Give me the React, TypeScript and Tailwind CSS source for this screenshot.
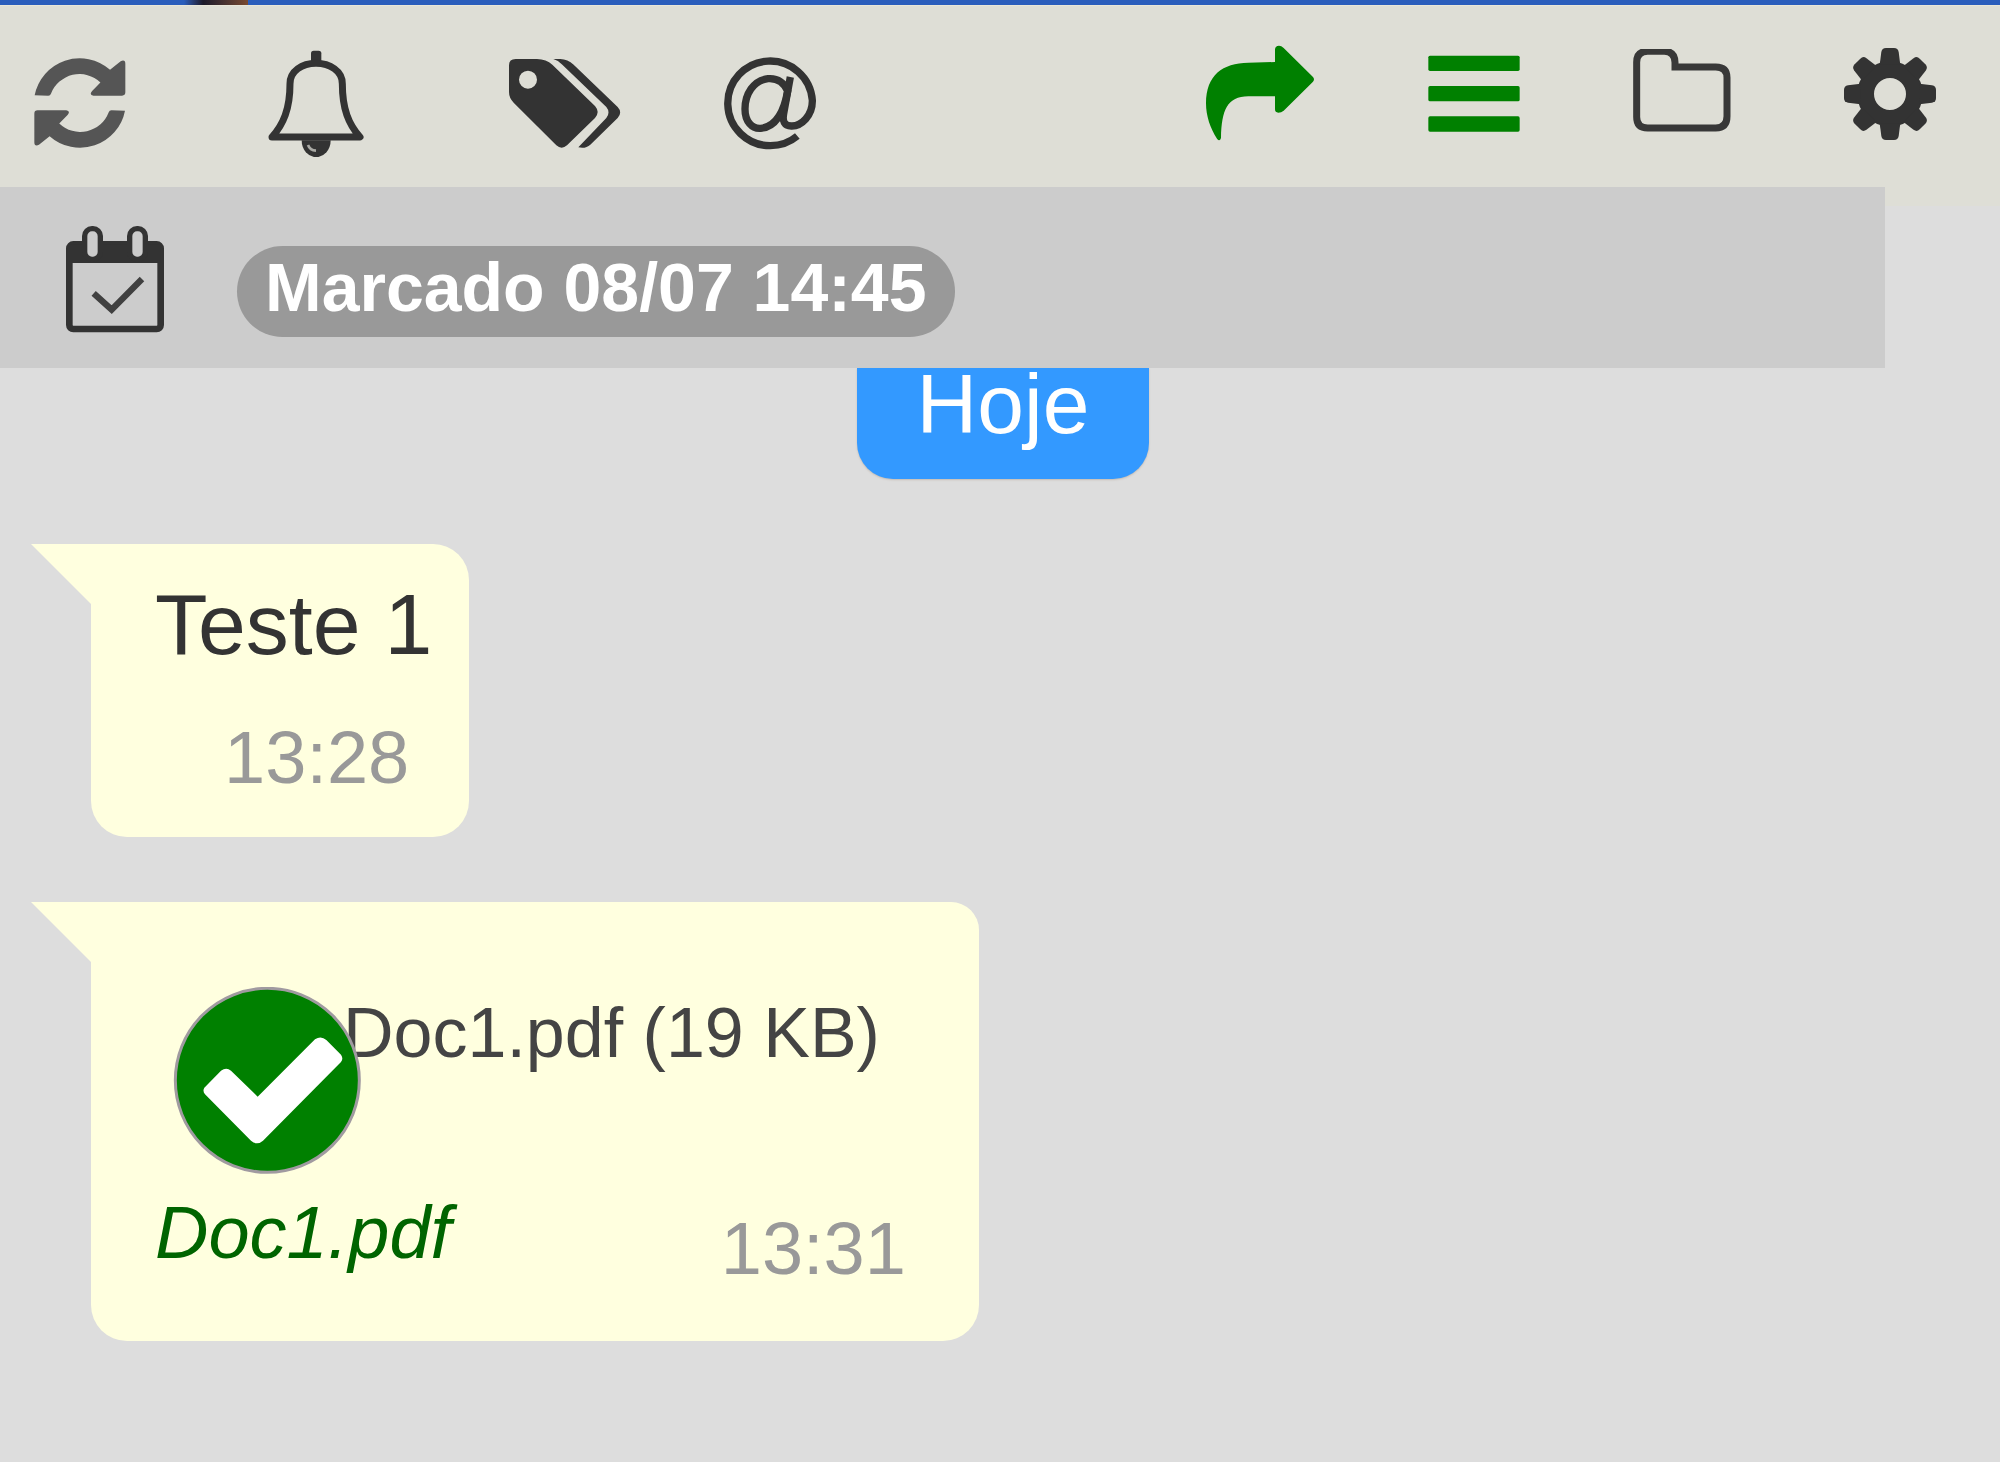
import type { ReactNode } from "react";

const GEAR_ANGLES = [0, 45, 90, 135, 180, 225, 270, 315];

function RefreshIcon() {
  const half =
    "M105 289 A138 138 0 0 1 332 212 L364 186 Q378 180 378 194 V280 Q378 290 368 290 H282 Q268 288 278 276 L303 250 A92 92 0 0 0 154 284 Q152 290 146 290 Z";
  return (
    <svg viewBox="103 168 277 288" className="h-24 w-[92px]" fill="#555555" aria-hidden="true">
      <path d={half} />
      <path d={half} transform="rotate(180 241 312)" />
    </svg>
  );
}

function BellIcon() {
  return (
    <svg viewBox="800 146 300 324" className="h-[108px] w-[100px]" aria-hidden="true">
      <rect x="935" y="151" width="31" height="42" rx="8" fill="#333333" />
      <path
        d="M818 410 C852 372 872 326 872 250 C872 212 908 189 950 189 C992 189 1029 212 1029 250 C1029 326 1048 372 1082 410 Z"
        fill="none"
        stroke="#333333"
        strokeWidth="21"
        strokeLinejoin="round"
      />
      <path d="M907 420 H994 A43 50 0 0 1 907 420 Z" fill="#333333" />
      <path d="M926 434 Q932 450 950 451" fill="none" stroke="#aaaaa5" strokeWidth="8" />
    </svg>
  );
}

function TagsIcon() {
  return (
    <svg viewBox="145 167 342 279" className="h-[93px] w-[114px]" fill="#333333" aria-hidden="true">
      <path
        fillRule="evenodd"
        d="M148 192 Q148 173 168 173 H232 Q260 174 278 190 L406 314 Q422 332 406 350 L322 432 Q306 446 290 432 L162 304 Q148 290 148 272 Z M178 235 A27 27 0 1 0 232 235 A27 27 0 1 0 178 235 Z"
      />
      <path d="M281 173 H302 Q324 174 342 190 L474 317 Q489 333 474 350 L392 430 Q378 443 356 438 L440 350 Q453 333 440 317 L308 190 Q296 177 281 173 Z" />
    </svg>
  );
}

function AtIcon() {
  return (
    <svg
      viewBox="794 170 279 279"
      className="h-[93px] w-[93px]"
      fill="none"
      stroke="#333333"
      strokeWidth="22"
      aria-hidden="true"
    >
      <path d="M1014 407 Q979 436 933 436 A127 127 0 1 1 1059 300 C1060 346 1026 378 996 377 C974 376 969 362 973 340 L993 230" />
      <path d="M985 272 C972 242 952 233 926 235 C882 240 857 282 857 326 C857 364 878 386 904 384 C948 380 973 340 985 272 Z" />
    </svg>
  );
}

function ShareIcon() {
  return (
    <svg viewBox="132 130 330 297" className="h-[99px] w-[110px]" fill="#008000" aria-hidden="true">
      <path d="M342 146 Q343 135 354 135 Q361 135 368 142 L456 229 Q462 236 456 243 L368 330 Q361 336 352 336 Q342 336 342 326 V287 H262 C198 288 182 328 180 412 Q176 424 168 414 C148 384 135 346 135 308 C136 222 184 188 262 186 L342 184 Z" />
    </svg>
  );
}

function BarsIcon() {
  return (
    <svg viewBox="796 165 276 231" className="h-[77px] w-[92px]" fill="#008000" aria-hidden="true">
      <rect x="797" y="167" width="274" height="46" rx="5" />
      <rect x="797" y="258" width="274" height="46" rx="5" />
      <rect x="797" y="349" width="274" height="46" rx="5" />
    </svg>
  );
}

function FolderIcon() {
  return (
    <svg viewBox="156 148 294 267" className="h-[89px] w-[98px]" aria-hidden="true">
      <path
        d="M167 188 Q167 155 200 155 H250 Q281 155 282 188 V202 H404 Q438 202 438 234 V350 Q438 385 404 385 H200 Q167 385 167 352 Z"
        fill="none"
        stroke="#383838"
        strokeWidth="21"
        className="overflow-visible"
      />
    </svg>
  );
}

function GearIcon() {
  return (
    <svg viewBox="-138 -141 276 282" className="h-[94px] w-[92px]" fill="#333333" aria-hidden="true">
      <circle r="73" fill="none" stroke="#333333" strokeWidth="50" />
      {GEAR_ANGLES.map((angle) => (
        <path
          key={angle}
          transform={`rotate(${angle})`}
          d="M-31 -88 L-26 -126 Q-24 -138 -12 -138 H12 Q24 -138 26 -126 L31 -88 Z"
        />
      ))}
    </svg>
  );
}

function CalendarCheckIcon() {
  return (
    <svg viewBox="198 138 294 324" className="h-[108px] w-[98px]" aria-hidden="true">
      <rect x="208" y="196" width="274" height="254" rx="12" fill="none" stroke="#333333" strokeWidth="20" />
      <path d="M208 196 H482 V252 H208 Z" fill="#333333" />
      <rect x="254" y="149" width="47" height="92" rx="22" fill="#cccccc" stroke="#333333" strokeWidth="16" />
      <rect x="389" y="149" width="47" height="92" rx="22" fill="#cccccc" stroke="#333333" strokeWidth="16" />
      <path d="M281 343 L335 392 L426 300" fill="none" stroke="#404040" strokeWidth="19" />
    </svg>
  );
}

function DoneIcon() {
  return (
    <svg viewBox="518 323 564 561" className="relative z-10 h-[187px] w-[188px] shrink-0" role="img" aria-label="Concluído">
      <circle cx="801" cy="603" r="276" fill="#008000" stroke="#a09aa0" strokeWidth="9" />
      <path
        d="M612 625 Q606 635 614 645 L752 784 Q770 800 788 784 L1022 548 Q1030 538 1022 526 L978 482 Q962 468 944 480 L772 652 L692 574 Q678 562 662 574 Z"
        fill="#ffffff"
      />
    </svg>
  );
}

function ToolButton({ label, children }: { label: string; children: ReactNode }) {
  return (
    <button type="button" aria-label={label} className="flex cursor-pointer items-center justify-center">
      {children}
    </button>
  );
}

function Bubble({ className, children }: { className: string; children: ReactNode }) {
  return (
    <article className={`relative w-fit rounded-b-[36px] bg-[#ffffdf] pl-16 ${className}`}>
      <svg viewBox="0 0 60 60" className="absolute top-0 right-full h-[60px] w-[60px]" aria-hidden="true">
        <path d="M0 0 H60 V60 Z" fill="#ffffdf" />
      </svg>
      {children}
    </article>
  );
}

export default function App() {
  return (
    <div className="min-h-screen bg-[#dddddd] font-['Liberation_Sans',Arial,sans-serif] text-[#333333]">
      <div className="h-[5px] bg-[#2a5dbc] pl-[184px]">
        <div className="h-full w-16 bg-linear-to-r from-[#2a5dbc] via-[#1c1a2a] via-30% to-[#7a4a30]" />
      </div>
      <header className="flex h-[182px] items-start justify-between border-t border-[#e8e6d8] bg-[#deded6] pr-16 pl-[34px]">
        <div className="flex items-center pt-[43px]">
          <ToolButton label="Atualizar"><RefreshIcon /></ToolButton>
          <div className="ml-[140px] flex"><ToolButton label="Notificações"><BellIcon /></ToolButton></div>
          <div className="ml-[142px] flex"><ToolButton label="Etiquetas"><TagsIcon /></ToolButton></div>
          <div className="ml-[102px] flex"><ToolButton label="Menções"><AtIcon /></ToolButton></div>
        </div>
        <div className="flex items-center gap-[113px] pt-[38px]">
          <ToolButton label="Encaminhar"><ShareIcon /></ToolButton>
          <ToolButton label="Menu"><BarsIcon /></ToolButton>
          <ToolButton label="Pasta"><FolderIcon /></ToolButton>
          <ToolButton label="Configurações"><GearIcon /></ToolButton>
        </div>
      </header>
      <div className="flex items-start">
        <div className="flex h-[181px] flex-1 items-center gap-[73px] bg-[#cccccc] pt-0.5 pl-[66px]">
          <CalendarCheckIcon />
          <span className="mt-[26px] rounded-full bg-[#999999] px-7 pb-2 text-[68px] leading-[83px] font-bold whitespace-nowrap text-white">
            Marcado 08/07 14:45
          </span>
        </div>
        <div className="h-[19px] w-[115px] bg-[#deded6]" />
      </div>
      <main className="flex flex-col gap-[65px] pl-[91px]">
        <div className="-ml-[85px] flex justify-center">
          <span className="rounded-b-[36px] bg-[#3399ff] px-[60px] pb-[39px] text-[84px] leading-[72px] text-white shadow-[0_1px_2px_#c4bcb4]">
            Hoje
          </span>
        </div>
        <Bubble className="rounded-tr-[36px] pt-8 pr-[37px] pb-[33px]">
          <p className="text-[86px] leading-[96px]">Teste 1</p>
          <time className="mt-10 block pr-[23px] text-right text-[74px] leading-[92px] text-[#999999]">13:28</time>
        </Bubble>
        <Bubble className="rounded-tr-[28px] pt-[85px] pr-[73px] pb-[46px]">
          <div className="flex items-start pr-[26px] pl-[18px]">
            <DoneIcon />
            <span className="-ml-[18px] pt-1.5 text-[70px] leading-20 whitespace-nowrap text-[#444444]">Doc1.pdf (19 KB)</span>
          </div>
          <div className="mt-[13px] flex items-start justify-between text-[74px] leading-[92px]">
            <em className="text-[#006400]">Doc1.pdf</em>
            <time className="mt-4 text-[#999999]">13:31</time>
          </div>
        </Bubble>
      </main>
    </div>
  );
}
